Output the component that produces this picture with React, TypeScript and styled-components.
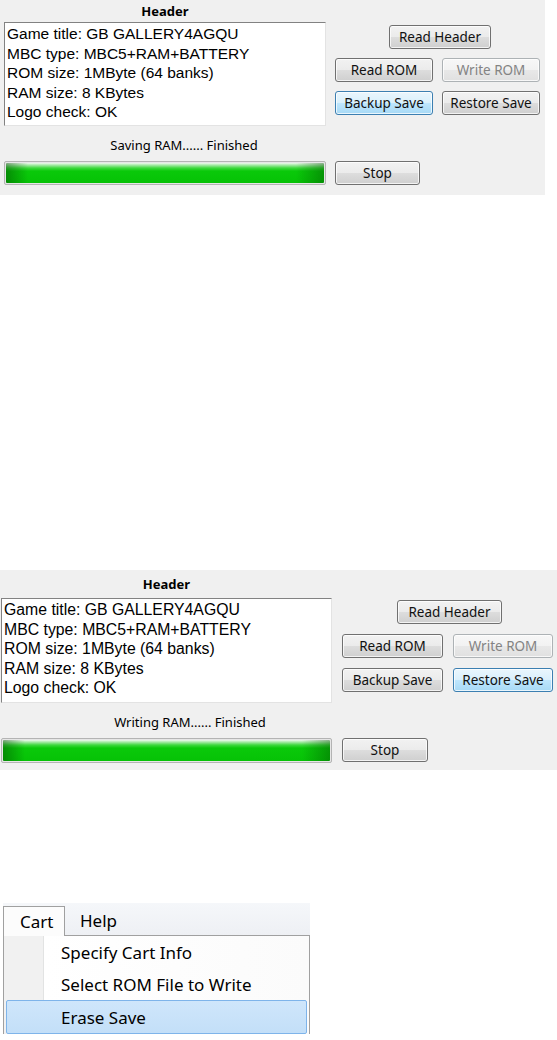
import React from 'react';
import styled, { createGlobalStyle, css } from 'styled-components';

const GlobalStyle = createGlobalStyle`
  html, body {
    margin: 0;
    padding: 0;
    background: #ffffff;
  }
  body {
    font-family: 'Noto Sans', 'Open Sans', sans-serif;
    font-size: 13px;
    color: #000;
  }
`;

const Page = styled.div`
  display: flex;
  flex-direction: column;
  align-items: flex-start;
`;

type Dims = {
  width: number;
  textW: number;
  colGap: number;
  titleH: number;
  textH: number;
  bottomH: number;
  padLeft: number;
  btnTop: number;
  btnGap: number;
  btnW: number;
  btn2W: number;
  headerW: number;
  stopW: number;
  barH: number;
  statusShift: number;
  infoSize: number;
};

const Panel = styled.div<{ $d: Dims }>`
  width: ${p => p.$d.width - p.$d.padLeft}px;
  padding-left: ${p => p.$d.padLeft}px;
  background: #f0f0f0;
  display: grid;
  grid-template-columns: ${p => p.$d.textW}px 1fr;
  grid-template-rows: ${p => p.$d.titleH}px ${p => p.$d.textH}px 35px ${p => p.$d.barH}px ${p => p.$d.bottomH}px;
  grid-template-areas:
    'title .'
    'info buttons'
    'status .'
    'bar stop'
    '. .';
  column-gap: ${p => p.$d.colGap}px;
`;

const Title = styled.div`
  grid-area: title;
  display: flex;
  align-items: center;
  justify-content: center;
  font-weight: 700;
  font-size: 13px;
`;

const InfoBox = styled.div<{ $size: number }>`
  grid-area: info;
  background: #ffffff;
  border: 1px solid;
  border-color: #828282 #e3e3e3 #e3e3e3 #828282;
  padding: 1px 2px;
  font-family: 'Liberation Sans', Arial, sans-serif;
  font-size: ${p => p.$size}px;
  line-height: 19.5px;
  overflow: hidden;
`;

const Buttons = styled.div<{ $top: number; $gap: number }>`
  grid-area: buttons;
  display: flex;
  flex-direction: column;
  align-items: flex-start;
  padding-top: ${p => p.$top}px;
  gap: ${p => p.$gap}px;
`;

const ButtonRow = styled.div<{ $gap: number; $centered?: boolean }>`
  display: flex;
  gap: ${p => p.$gap}px;
  ${p => p.$centered && css`align-self: stretch; justify-content: center;`}
`;

const Button = styled.button<{ $w: number; $state?: 'normal' | 'hot' | 'disabled' }>`
  width: ${p => p.$w}px;
  height: 24px;
  padding: 0;
  font-family: 'Noto Sans', 'Open Sans', sans-serif;
  font-size: 13.5px;
  border-radius: 3px;
  border: 1px solid #707070;
  color: #111;
  box-shadow: inset 0 0 0 1px rgba(255, 255, 255, 0.75);
  background: linear-gradient(#f2f2f2 0%, #ebebeb 50%, #dddddd 51%, #cfcfcf 100%);
  ${p =>
    p.$state === 'hot' &&
    css`
      border-color: #3c7fb1;
      background: linear-gradient(#eaf6fd 0%, #d9f0fc 50%, #bee6fd 51%, #a7d9f5 100%);
    `}
  ${p =>
    p.$state === 'disabled' &&
    css`
      border-color: #adb2b5;
      color: #838383;
      background: linear-gradient(#f7f7f7 0%, #f2f2f2 50%, #e8e8e8 51%, #e0e0e0 100%);
    `}
`;

const Status = styled.div<{ $shift: number }>`
  grid-area: status;
  padding-top: 10px;
  padding-left: ${p => p.$shift}px;
  text-align: center;
  font-size: 13px;
  line-height: 18px;
`;

const Bar = styled.div`
  grid-area: bar;
  border: 1px solid #b4b4b4;
  border-radius: 2px;
  background: #e6e6e6;
  padding: 1px;
`;

const Fill = styled.div`
  height: 100%;
  border-radius: 1px;
  background:
    linear-gradient(to right, rgba(0, 70, 0, 0.45) 0, rgba(0, 70, 0, 0) 22px, rgba(0, 70, 0, 0) calc(100% - 28px), rgba(0, 70, 0, 0.4) 100%),
    linear-gradient(to bottom, #eef9ee 0, #a8eaa8 2px, #3ed83e 5px, #0ac90a 8px, #06c206 100%);
`;

const StopCell = styled.div`
  grid-area: stop;
  display: flex;
`;

type PanelProps = { d: Dims; status: string; hot: 'backup' | 'restore'; marginTop: number };

function DumperPanel({ d, status, hot, marginTop }: PanelProps) {
  return (
    <div style={{ marginTop }}>
      <Panel $d={d}>
        <Title>Header</Title>
        <InfoBox $size={d.infoSize}>
          <div>Game title: GB GALLERY4AGQU</div>
          <div>MBC type: MBC5+RAM+BATTERY</div>
          <div>ROM size: 1MByte (64 banks)</div>
          <div>RAM size: 8 KBytes</div>
          <div>Logo check: OK</div>
        </InfoBox>
        <Buttons $top={d.btnTop} $gap={d.btnGap}>
          <ButtonRow $gap={d.btnGap} $centered>
            <Button $w={d.headerW}>Read Header</Button>
          </ButtonRow>
          <ButtonRow $gap={d.btnGap}>
            <Button $w={d.btnW}>Read ROM</Button>
            <Button $w={d.btn2W} $state="disabled">Write ROM</Button>
          </ButtonRow>
          <ButtonRow $gap={d.btnGap}>
            <Button $w={d.btnW} $state={hot === 'backup' ? 'hot' : 'normal'}>Backup Save</Button>
            <Button $w={d.btn2W} $state={hot === 'restore' ? 'hot' : 'normal'}>Restore Save</Button>
          </ButtonRow>
        </Buttons>
        <Status $shift={d.statusShift}>{status}</Status>
        <Bar>
          <Fill />
        </Bar>
        <StopCell>
          <Button $w={d.stopW}>Stop</Button>
        </StopCell>
      </Panel>
    </div>
  );
}

const first: Dims = {
  width: 545,
  textW: 322,
  colGap: 9,
  titleH: 22,
  textH: 104,
  bottomH: 10,
  padLeft: 4,
  btnTop: 3,
  btnGap: 9,
  btnW: 98,
  btn2W: 98,
  headerW: 102,
  stopW: 85,
  barH: 24,
  statusShift: 38,
  infoSize: 15.5,
};

const second: Dims = {
  width: 557,
  textW: 331,
  colGap: 10,
  titleH: 28,
  textH: 105,
  bottomH: 7,
  padLeft: 1,
  btnTop: 2,
  btnGap: 10,
  btnW: 101,
  btn2W: 100,
  headerW: 105,
  stopW: 86,
  barH: 25,
  statusShift: 47,
  infoSize: 15.8,
};

/* menu */

const MenuWrap = styled.div`
  margin-top: 133px;
  margin-left: 3px;
  width: 307px;
  font-family: 'Noto Sans', 'Open Sans', sans-serif;
  font-size: 17px;
`;

const MenuBar = styled.div`
  height: 32px;
  display: flex;
  align-items: flex-end;
  background: linear-gradient(#f5f7fa, #eef0f4);
`;

const MenuTitle = styled.div<{ $open?: boolean }>`
  height: 29px;
  padding: 0 14px;
  display: flex;
  align-items: center;
  border: 1px solid transparent;
  border-bottom: none;
  ${p =>
    p.$open &&
    css`
      width: 62px;
      padding: 0 0 0 16px;
      box-sizing: border-box;
      border-color: #a0a0a0;
      background: #fcfcfc;
      margin-bottom: -1px;
      height: 30px;
      position: relative;
    `}
`;

const Dropdown = styled.div`
  border: 1px solid #a0a0a0;
  border-bottom: none;
  background: linear-gradient(to right, #f1f1f1 0, #f1f1f1 39px, #e2e3e3 39px, #e2e3e3 40px, #ffffff 40px, #fbfbfb 100%);
  padding: 0 2px;
  display: flex;
  flex-direction: column;
`;

const MenuItem = styled.div<{ $active?: boolean }>`
  box-sizing: border-box;
  height: 32px;
  padding-left: 54px;
  display: flex;
  align-items: center;
  border: 1px solid transparent;
  border-radius: 2px;
  ${p =>
    p.$active &&
    css`
      height: 34px;
      border-color: #7eb4ea;
      background: linear-gradient(#cfe6fb, #c3dff8);
    `}
`;

export default function App() {
  return (
    <Page>
      <GlobalStyle />
      <DumperPanel d={first} status="Saving RAM...... Finished" hot="backup" marginTop={0} />
      <DumperPanel d={second} status="Writing RAM...... Finished" hot="restore" marginTop={375} />
      <MenuWrap>
        <MenuBar>
          <MenuTitle $open>Cart</MenuTitle>
          <MenuTitle>Help</MenuTitle>
        </MenuBar>
        <Dropdown>
          <MenuItem>Specify Cart Info</MenuItem>
          <MenuItem>Select ROM File to Write</MenuItem>
          <MenuItem $active>Erase Save</MenuItem>
        </Dropdown>
      </MenuWrap>
    </Page>
  );
}
